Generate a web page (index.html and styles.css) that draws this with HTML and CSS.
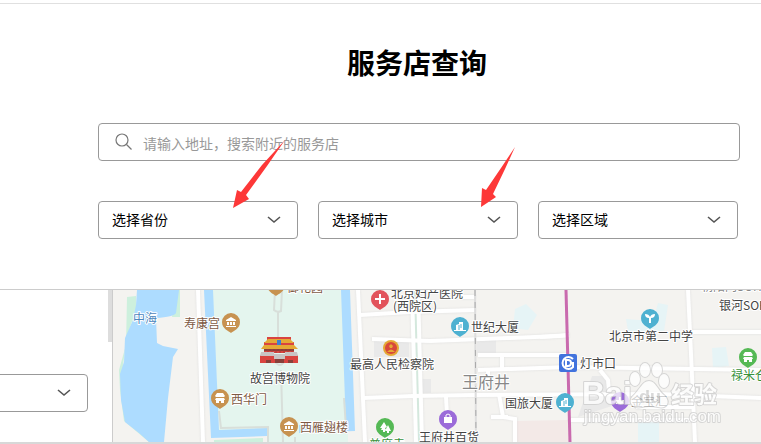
FILE: index.html
```html
<!DOCTYPE html>
<html lang="zh-CN">
<head>
    <meta charset="UTF-8">
    <meta name="viewport" content="width=device-width, initial-scale=1.0">
    <title>服务店查询</title>
    <link rel="stylesheet" href="styles.css">
</head>
<body>
    <header class="query">
        <h1>服务店查询</h1>
        <label class="search">
            <svg class="search-icon" width="18" height="18" viewBox="0 0 18 18">
                <circle cx="7" cy="7" r="6"/>
                <path d="M11.5 11.5L16.5 16.5"/>
            </svg>
            <input type="text" placeholder="请输入地址，搜索附近的服务店" aria-label="地址">
        </label>
        <div class="filters">
            <div class="dropdown">
                <select aria-label="省份"><option>选择省份</option></select>
                <svg class="chevron" width="14" height="8" viewBox="0 0 14 8"><path d="M1 1l6 5 6-5"/></svg>
            </div>
            <div class="dropdown">
                <select aria-label="城市"><option>选择城市</option></select>
                <svg class="chevron" width="14" height="8" viewBox="0 0 14 8"><path d="M1 1l6 5 6-5"/></svg>
            </div>
            <div class="dropdown">
                <select aria-label="区域"><option>选择区域</option></select>
                <svg class="chevron" width="14" height="8" viewBox="0 0 14 8"><path d="M1 1l6 5 6-5"/></svg>
            </div>
        </div>
        <svg class="pointers" width="761" height="290" viewBox="0 0 761 290">
            <path d="M285 140L262 165L241 192L237 190L233 208L249 199L246 195L267 166Z"/>
            <path d="M515 147L501 168L486 190L482 188L481 207L496 197L493 194L505 169Z"/>
        </svg>
    </header>

    <main class="result">
        <aside class="sidebar">
            <div class="dropdown">
                <select aria-label="门店类型"><option></option></select>
                <svg class="chevron" width="14" height="8" viewBox="0 0 14 8"><path d="M1 1l6 5 6-5"/></svg>
            </div>
            <div class="scroll-thumb"></div>
        </aside>

        <svg class="map" viewBox="113 290 648 152" preserveAspectRatio="xMinYMin slice">
            <defs>
                <path id="pin" d="M0 11C-2 9-9 7-9 0A9 9 0 1 1 9 0C9 7 2 9 0 11Z"/>
                <g id="museum">
                    <path d="M-5-2L0-5L5-2V-1H-5ZM-5 4H5V5H-5ZM-4 0H-2V3H-4ZM-1 0H1V3H-1ZM2 0H4V3H2Z"/>
                </g>
                <g id="gate">
                    <path d="M-3-5H3L5-2L4-1H-4L-5-2ZM-4 0H4L5 2H4V5H1V3H-1V5H-4V2H-5Z"/>
                </g>
                <g id="tower" class="tower">
                    <path class="glyph" d="M-4 4V-1L-1-2V-4H3V4Z"/>
                    <path d="M-6 4.5H6"/>
                    <path class="window" d="M-1-1V4M1-2V2"/>
                </g>
            </defs>

            <!-- water and parks -->
            <g class="park">
                <path d="M127 297L136 296V310L127 336L123 365L122 392L128 421L150 440L155 442H149L124 421L120 390L119 370L126 345Z"/>
                <path d="M180 290V317H172L176 290Z"/>
                <path d="M214 440L263 438V442H214Z"/>
                <path class="palace" d="M212 290H342L348 428V442H268L266 430L219 430Z"/>
                <path d="M411 290H418L421 442H416Z"/>
            </g>
            <g class="water">
                <path d="M137 290H179L176 313Q174 317 156 318L157 343L163 346L178 349L173 357L168 398L164 442H149L139 433L125 422L121 400L120 374L124 362L125 338L133 320L136 305Z"/>
                <path d="M204 290H213L219 430L267 428V436L211 438Z"/>
                <path d="M341 290H350L355 431L299 433V425L346 428Z"/>
            </g>
            <g class="pool">
                <path d="M515 309L526 304L537 315L528 330L513 328Z"/>
                <path d="M626 319L653 321L658 303L668 305L664 331L628 331Z"/>
                <path d="M712 348L726 347L729 366L713 368Z"/>
                <path d="M638 422H659V442H638Z"/>
            </g>
            <g class="block">
                <path d="M374 339H409V357H374ZM422 379H431V393H422ZM477 340H496V353H477ZM592 376H608L612 406L578 417Z"/>
                <path class="mall" d="M517 421L568 420L570 442H517Z"/>
            </g>

            <!-- roads -->
            <g class="road">
                <path d="M198 290L203 442"/>
                <path d="M358 290L365 442"/>
                <path d="M412 290L416 442M418 290L422 442"/>
                <path d="M360 315L410 312L475 310"/>
                <path d="M372 339L430 341L560 336L569 335"/>
                <path d="M363 398L413 396L475 395L660 394L761 398"/>
                <path d="M446 397L447 415"/>
                <path d="M688 290L690 332L695 442"/>
                <path d="M692 332H761"/>
                <path d="M478 355L569 355"/>
                <path d="M502 355V368M478 370L569 367L761 370"/>
                <path d="M488 370V382M499 394L503 417L515 419V442M491 417H508"/>
                <path d="M462 297H475M540 337L569 335"/>
                <path d="M569 420H694M636 407H694"/>
                <path d="M600 370L608 380L609 391"/>
            </g>
            <path class="path-line" d="M275 290L274 310Q277 313 281 311L282 290M278 312V338M274 360Q280 370 285 360M281 370L283 442M219 411L221 428L268 427V442M344 398L346 428M295 437V442"/>
            <path class="railway" d="M475 290L476 442"/>
            <path class="railway-dash" d="M475 290L476 442"/>
            <path class="metro" d="M566 290L570 442"/>

            <!-- palace -->
            <g class="tiananmen">
                <path class="red" d="M267 337H291V353H264V342H267ZM264 342H294V353H264Z"/>
                <path class="gold" d="M268 339H290L294 343H264ZM264 345H294L298 349H261Z"/>
                <path class="dark" d="M264 349H294V351H264Z"/>
                <path class="red" d="M260 355H298V363H260Z"/>
                <path class="beam" d="M268 349V353M272 349V353M276 349V353M280 349V353M284 349V353M288 349V353M292 349V353"/>
                <path class="stone" d="M261 352H274V354H285V352H297L298 356H285V359H274V356H260Z"/>
                <path class="dark" d="M266 360H271V363H266ZM275 359H284V363H275ZM288 360H293V363H288Z"/>
                <path class="plaque" d="M277 340H281V345H277Z"/>
            </g>

            <!-- pins -->
            <g class="brown">
                <g transform="translate(231 322)"><use href="#pin"/><use class="glyph" href="#museum"/></g>
                <g transform="translate(276 285)"><use href="#pin"/></g>
                <g transform="translate(220 398)"><use href="#pin"/><use class="glyph" href="#gate"/></g>
                <g transform="translate(289 426)"><use href="#pin"/><use class="glyph" href="#museum"/></g>
            </g>
            <g class="red" transform="translate(380 299)"><use href="#pin"/><path class="glyph" d="M-1-5H1V-1H5V1H1V5H-1V1H-5V-1H-1Z"/></g>
            <g class="blue">
                <g transform="translate(460 326)"><use href="#pin"/><use href="#tower"/></g>
                <g transform="translate(565 402)"><use href="#pin"/><use href="#tower"/></g>
                <g transform="translate(650 318)"><use href="#pin"/><path class="glyph" d="M-1 5V0Q-5 0-5-4Q-1-4 0-1Q1-4 5-4Q5 0 1 0V5Z"/></g>
            </g>
            <g class="green">
                <g transform="translate(385 427)"><use href="#pin"/><path class="glyph" d="M-1-5L-5 1H-3L-4 3H-2V5H0V3H1L0 1L2 0ZM3-2L0 4H2V6H4V4H6Z"/></g>
                <g transform="translate(748 357)"><use href="#pin"/><use class="glyph" href="#gate"/></g>
            </g>
            <g class="purple">
                <g transform="translate(448 419)"><use href="#pin"/><path class="glyph" d="M-4-2H4V4H-4Z"/><path class="handle" d="M-2-2V-4Q0-6 2-4V-2"/></g>
                <g transform="translate(620 401)"><use href="#pin"/><path class="glyph" d="M-4-1H4V3H-4ZM-1-4H1V0H-1Z"/></g>
            </g>
            <g class="court" transform="translate(391 348)">
                <circle r="8"/>
                <circle class="inner" r="6"/>
                <path d="M-4 4Q0-1 4 4ZM-2-2L0-4L2-2L1 0H-1Z"/>
            </g>
            <g class="subway" transform="translate(568 363)">
                <rect x="-9" y="-9" width="18" height="18" rx="2"/>
                <path d="M5-4A6 6 0 1 0 5 4V0H2M-2-3V3H0A3 3 0 0 0 0-3Z"/>
            </g>

            <!-- place names -->
            <g class="label">
                <text class="water-name" x="133" y="323">中海</text>
                <g class="sight">
                    <text x="184" y="328">寿康宫</text>
                    <text x="287" y="292">御花园</text>
                    <text x="231" y="404">西华门</text>
                    <text x="300" y="432">西雁翅楼</text>
                </g>
                <text x="250" y="383">故宫博物院</text>
                <text x="391" y="298">北京妇产医院</text>
                <text x="393" y="311">(西院区)</text>
                <text x="471" y="332">世纪大厦</text>
                <text x="350" y="369">最高人民检察院</text>
                <text class="area" x="462" y="388">王府井</text>
                <text x="505" y="408">国旅大厦</text>
                <text x="419" y="442">王府井百货</text>
                <text x="580" y="368">灯市口</text>
                <text x="609" y="341">北京市第二中学</text>
                <text x="719" y="310">银河SOHO</text>
                <text class="faint" x="701" y="291">朝阳门SOHO</text>
                <text x="631" y="406">金宝汇</text>
                <g class="leafy">
                    <text x="369" y="449">普度寺</text>
                    <text x="731" y="380">禄米仓</text>
                </g>
            </g>

            <!-- watermark -->
            <g class="watermark">
                <text class="brand" x="582" y="404">Bai</text>
                <g class="paw">
                    <ellipse cx="635" cy="379" rx="5" ry="7"/>
                    <ellipse cx="645" cy="370" rx="5" ry="7"/>
                    <ellipse cx="657" cy="370" rx="5" ry="7"/>
                    <ellipse cx="664" cy="381" rx="5" ry="7"/>
                    <path d="M649 381C656 381 657 390 665 396C671 403 666 409 658 407Q649 405 642 407C633 409 628 403 632 397C640 390 642 381 649 381Z"/>
                </g>
                <text class="brand-small" x="639" y="403">du</text>
                <text class="brand-cn" x="671" y="403">经验</text>
                <text class="site" x="584" y="422">jingyan.baidu.com</text>
            </g>
        </svg>
    </main>
</body>
</html>
```

FILE: styles.css
```css
* {
    box-sizing: border-box;
}
body {
    margin: 0;
    padding-top: 3px;
    background-color: #fff;
    color: #000;
    font-family: "Noto Sans CJK SC", sans-serif;
    font-size: 14px;
    overflow: hidden;
}
.query {
    padding: 38px 21px 50px 98px;
    border-top: 1px solid #e0e0e0;
    border-bottom: 1px solid #ccc;
}
h1 {
    margin: 0 4px 41px 0;
    font-size: 28px;
    line-height: 40px;
    text-align: center;
}
.search {
    display: flex;
    align-items: center;
    gap: 10px;
    height: 38px;
    padding: 0 16px;
    border: 1px solid #999;
    border-radius: 4px;
}
.search-icon {
    fill: none;
    stroke: #777;
    stroke-width: 1.2;
}
.search input {
    flex: 1;
    min-width: 0;
    padding: 2px 0 0;
    border: none;
    outline: none;
    font: inherit;
}
.search input::placeholder {
    color: #999;
}
.filters {
    display: flex;
    gap: 20px;
    margin-top: 40px;
}
.dropdown {
    display: grid;
    flex: 0 0 200px;
    align-items: center;
}
.dropdown select {
    grid-area: 1 / 1;
    height: 38px;
    padding: 0 13px 2px;
    border: 1px solid #999;
    border-radius: 4px;
    background-color: #fff;
    color: #000;
    font: inherit;
    appearance: none;
}
.chevron {
    grid-area: 1 / 1;
    justify-self: end;
    margin-right: 17px;
    fill: none;
    stroke: #555;
    stroke-width: 1.6;
    pointer-events: none;
}
.pointers {
    position: absolute;
    top: 0;
    left: 0;
    fill: #fd3838;
    pointer-events: none;
}

.result {
    display: flex;
    border-bottom: 2px solid #d8d8d8;
}
.sidebar {
    display: flex;
    flex: 0 0 113px;
    justify-content: flex-end;
    align-items: flex-start;
    border-right: 1px solid #ccc;
    overflow: hidden;
}
.sidebar .dropdown {
    margin: 84px 20px 0 0;
}
.scroll-thumb {
    flex: 0 0 4px;
    height: 52px;
    background-color: #ddd;
}

.map {
    flex: 1;
    min-width: 0;
    background-color: #f4f3f0;
}
.park {
    fill: #cdf0dd;
}
.palace {
    fill: #e4f5ee;
}
.water {
    fill: #addcff;
}
.pool {
    fill: #e6f4f6;
}
.block {
    fill: #e9e9e9;
}
.mall {
    fill: #f3e9e7;
}
.road {
    fill: none;
    stroke: #fff;
    stroke-width: 4;
    filter: drop-shadow(0 0 1px #ddd);
}
.path-line {
    fill: none;
    stroke: #d8dfda;
    stroke-width: 2;
}
.railway {
    stroke: #ddd;
    stroke-width: 2;
}
.railway-dash {
    stroke: #aaa;
    stroke-width: 1;
    stroke-dasharray: 6 6;
}
.metro {
    stroke: #c96aae;
    stroke-width: 3;
}

.tiananmen .red {
    fill: #d94440;
}
.tiananmen .gold {
    fill: #e5a935;
}
.tiananmen .dark {
    fill: #87403a;
}
.tiananmen .stone {
    fill: #c9c4c4;
}
.tiananmen .plaque {
    fill: #3c7fd0;
}
.beam {
    stroke: #a83a36;
}
.brown {
    fill: #c79250;
}
.red {
    fill: #e2535b;
}
.blue {
    fill: #4eb1d1;
}
.green {
    fill: #55b955;
}
.purple {
    fill: #9b6bd9;
}
.glyph {
    fill: #fff;
}
.tower,
.handle {
    stroke: #fff;
}
.handle {
    fill: none;
}
.tower .glyph {
    stroke: none;
}
.window {
    stroke: #4eb1d1;
}
.court {
    fill: #e5a935;
}
.court .inner {
    fill: #d8483c;
}
.subway {
    fill: #4273dd;
}
.subway path {
    fill: none;
    stroke: #fff;
    stroke-width: 2;
}

.label {
    fill: #444;
    stroke: #fff;
    stroke-width: 2;
    stroke-linejoin: round;
    paint-order: stroke;
    font-size: 12px;
}
.water-name {
    fill: #4e86bd;
}
.sight {
    fill: #7d5a45;
}
.area {
    fill: #888;
    font-size: 16px;
}
.leafy {
    fill: #38913c;
}
.faint {
    fill: #888;
}

.watermark {
    fill: #fff;
    stroke: #ccc;
    stroke-width: 2;
    stroke-linejoin: round;
    paint-order: stroke;
    opacity: 0.75;
    font-family: "Liberation Sans", "Noto Sans CJK SC", sans-serif;
}
.brand {
    font-size: 32px;
    font-weight: bold;
}
.brand-small {
    fill: #ccc;
    stroke: none;
    font-size: 18px;
    font-weight: bold;
}
.brand-cn {
    font-size: 23px;
    font-weight: bold;
}
.site {
    font-size: 17px;
}
```
